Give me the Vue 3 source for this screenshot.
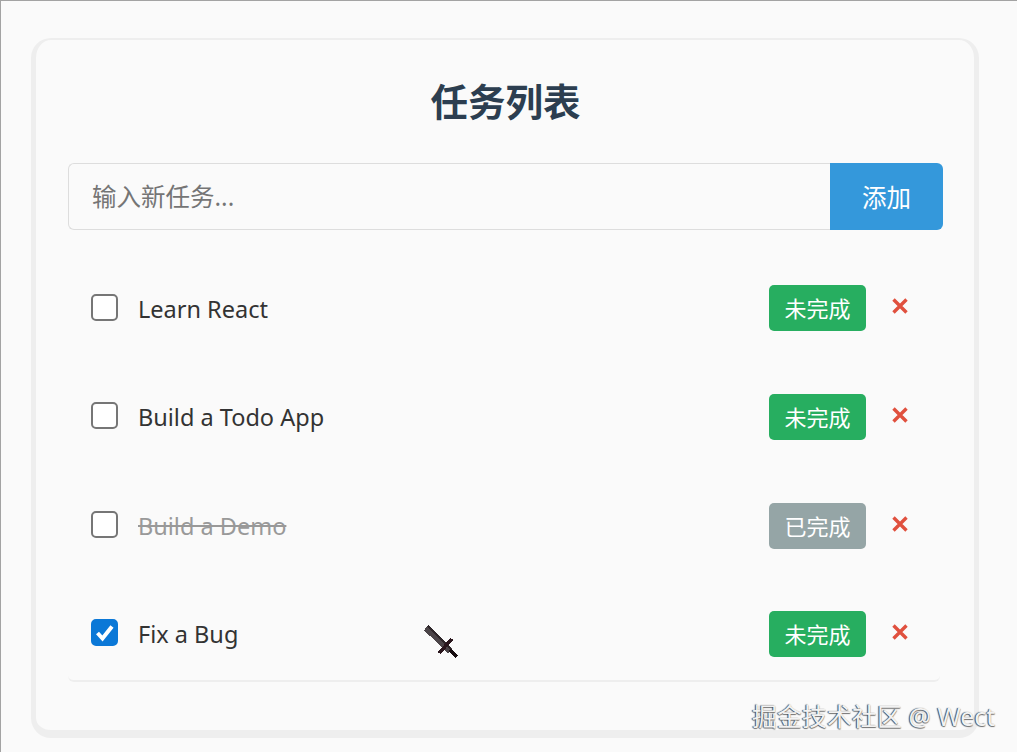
<template>
  <div class="page">
    <div class="card">
      <h1 class="title">任务列表</h1>
      <form class="add-form" @submit.prevent="addTask">
        <input v-model="draft" class="add-input" type="text" placeholder="输入新任务..." />
        <button class="add-btn" type="submit">添加</button>
      </form>
      <ul class="list">
        <li v-for="task in tasks" :key="task.id" class="row">
          <label class="check" :class="{ on: task.checked }">
            <input v-model="task.checked" type="checkbox" />
            <svg v-if="task.checked" viewBox="0 0 27 27" width="27" height="27">
              <path d="M6.5 14l5 5.5 9.5-12" fill="none" stroke="#fff" stroke-width="4" />
            </svg>
          </label>
          <span class="name" :class="{ done: task.done }">{{ task.text }}</span>
          <button class="badge" :class="{ done: task.done }" @click="task.done = !task.done">
            {{ task.done ? "已完成" : "未完成" }}
          </button>
          <button class="del" aria-label="删除" @click="removeTask(task.id)">
            <svg viewBox="0 0 18 18" width="18" height="18">
              <path d="M2.5 2.5l13 13M15.5 2.5l-13 13" stroke="#e0503e" stroke-width="3.4" fill="none" />
            </svg>
          </button>
        </li>
      </ul>
    </div>

    <svg class="cursor" viewBox="0 0 50 50" width="50" height="50" shape-rendering="crispEdges">
      <path d="M11 13l24 23" stroke="#4b4448" stroke-width="6" fill="none" />
      <path d="M13 11l23 23" stroke="#2e2629" stroke-width="1.5" fill="none" />
      <path d="M24 38l13-14" stroke="#2a161d" stroke-width="3.5" fill="none" />
      <path d="M35 35l7 7" stroke="#170c10" stroke-width="4" fill="none" />
    </svg>
    <div class="mark">掘金技术社区 @ Wect</div>
  </div>
</template>

<script setup>
import { ref } from "vue";

const draft = ref("");
const tasks = ref([
  { id: 1, text: "Learn React", checked: false, done: false },
  { id: 2, text: "Build a Todo App", checked: false, done: false },
  { id: 3, text: "Build a Demo", checked: false, done: true },
  { id: 4, text: "Fix a Bug", checked: true, done: false },
]);

function addTask() {
  if (!draft.value.trim()) return;
  tasks.value.push({ id: Date.now(), text: draft.value, checked: false, done: false });
  draft.value = "";
}

function removeTask(id) {
  tasks.value = tasks.value.filter((t) => t.id !== id);
}
</script>

<style>
html,
body {
  margin: 0;
  height: 752px;
  overflow: hidden;
  background: #fafafa;
}
</style>

<style scoped>
.page {
  position: relative;
  box-sizing: border-box;
  height: 752px;
  padding: 37px 0 0 30px;
  background: #fafafa;
  border-top: 1px solid #a3a3a3;
  border-left: 1px solid #a3a3a3;
  font-family: "Noto Sans", "Noto Sans CJK SC", sans-serif;
}
.card {
  box-sizing: border-box;
  width: 948px;
  height: 700px;
  padding: 0 31px 0 32px;
  background: #fafafa;
  border-style: solid;
  border-color: #eeeeee;
  border-width: 2px 5px 8px 5px;
  border-radius: 20px;
}
.title {
  margin: 0;
  padding-top: 37px;
  height: 50px;
  line-height: 50px;
  text-align: center;
  font-size: 37.5px;
  font-weight: 700;
  color: #2c3e50;
}
.add-form {
  display: flex;
  margin-top: 36px;
  height: 67px;
}
.add-input {
  flex: 1;
  min-width: 0;
  box-sizing: border-box;
  padding: 0 23px;
  border: 1px solid #dddddd;
  border-right: none;
  border-radius: 6px 0 0 6px;
  background: #fafafa;
  font: inherit;
  font-size: 24.5px;
  outline: none;
}
.add-input::placeholder {
  color: #757575;
}
.add-btn {
  width: 113px;
  border: none;
  border-radius: 0 6px 6px 0;
  background: #3498db;
  color: #fff;
  font: inherit;
  font-size: 24.5px;
}
.list {
  display: flex;
  flex-direction: column;
  gap: 14.8px;
  list-style: none;
  margin: 31px 3px 0 0;
  padding: 0;
}
.row {
  display: flex;
  align-items: center;
  height: 94px;
  box-sizing: border-box;
  padding: 0 31px 0 23px;
}
.row:last-child {
  height: 95px;
  border-bottom: 2px solid #eeeeee;
  border-radius: 0 0 6px 6px;
}
.check {
  position: relative;
  display: block;
  width: 27px;
  height: 27px;
  margin-top: -2px;
  box-sizing: border-box;
  border: 2px solid #767676;
  border-radius: 5px;
  background: #fff;
}
.check.on {
  border-color: #0b78d7;
  background: #0b78d7;
}
.check input {
  position: absolute;
  inset: 0;
  margin: 0;
  opacity: 0;
}
.check svg {
  position: absolute;
  top: -2px;
  left: -2px;
}
.name {
  flex: 1;
  margin: 1px 0 0 20px;
  font-size: 23.5px;
  color: #333333;
}
.name.done {
  color: #999999;
  text-decoration: line-through;
}
.badge {
  width: 97px;
  height: 46px;
  padding: 0 0 2px;
  border: none;
  border-radius: 5px;
  background: #27ae60;
  color: #fff;
  font: inherit;
  font-size: 22px;
}
.badge.done {
  background: #95a5a6;
}
.del {
  display: flex;
  margin: -4px 0 0 25px;
  padding: 0;
  border: none;
  background: none;
}
.cursor {
  position: absolute;
  top: 614px;
  left: 414px;
}
.mark {
  position: absolute;
  top: 697px;
  left: 751px;
  font-size: 25px;
  line-height: 36px;
  white-space: nowrap;
  color: #f2f2f2;
  text-shadow: -1px 0 1px #444, 0 1px 1px #777;
}
</style>
